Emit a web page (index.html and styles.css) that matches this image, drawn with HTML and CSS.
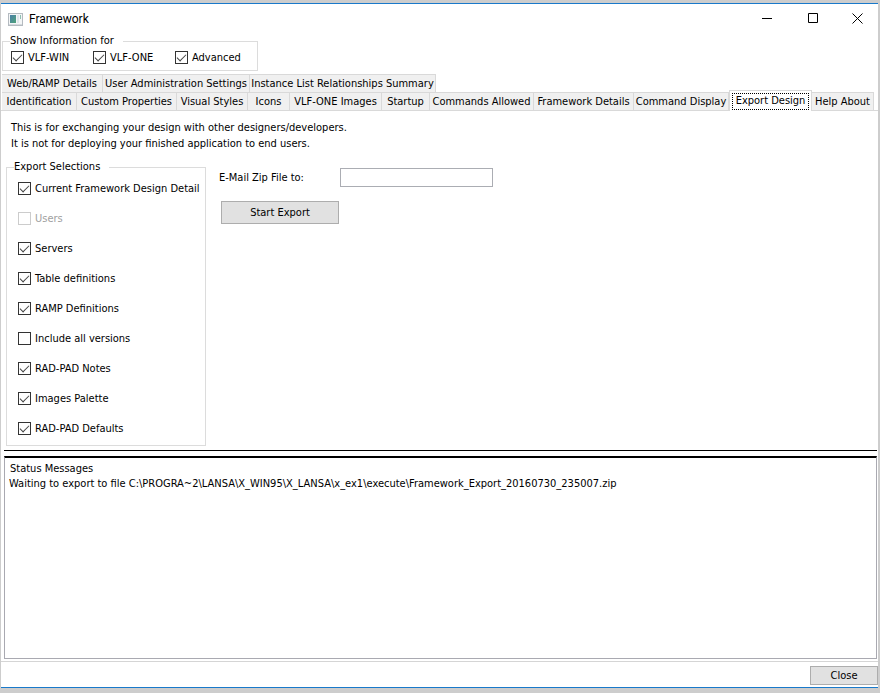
FILE: index.html
```html
<!DOCTYPE html>
<html lang="en">
<head>
    <meta charset="UTF-8">
    <meta name="viewport" content="width=device-width, initial-scale=1.0">
    <title>Framework</title>
    <link rel="stylesheet" href="styles.css">
</head>
<body>
    <div id="window">
        <!-- title bar -->
        <header class="titlebar">
            <svg class="app-icon" width="15" height="13" viewBox="0 0 15 13">
                <defs>
                    <linearGradient id="pane" x1="0" y1="0" x2="1" y2="1">
                        <stop offset="0" stop-color="#4a7fa8"/>
                        <stop offset="1" stop-color="#4fa37a"/>
                    </linearGradient>
                </defs>
                <rect x="0.5" y="0.5" width="14" height="12" fill="#f4f6f7" stroke="#b4bac0"/>
                <rect x="2" y="2" width="6" height="8" fill="url(#pane)"/>
                <rect x="9" y="2" width="2" height="8" fill="#dfe5ea"/>
                <rect x="12" y="2" width="1" height="4" fill="#8fc0b0"/>
                <rect x="1" y="11" width="13" height="1" fill="#d5dade"/>
            </svg>
            <h1>Framework</h1>
            <div class="win-buttons">
                <button type="button" aria-label="Minimize"><svg width="11" height="11" viewBox="0 0 11 11"><path d="M0 5.5h10"/></svg></button>
                <button type="button" aria-label="Maximize"><svg width="11" height="11" viewBox="0 0 11 11"><path d="M0.5 0.5h9v9h-9z"/></svg></button>
                <button type="button" aria-label="Close window"><svg width="11" height="11" viewBox="0 0 11 11"><path d="M0.5 0.5l10 10M10.5 0.5l-10 10"/></svg></button>
            </div>
        </header>

        <fieldset class="show-info">
            <legend>Show Information for</legend>
            <div class="show-list">
                <label><input type="checkbox" checked>VLF-WIN</label>
                <label><input type="checkbox" checked>VLF-ONE</label>
                <label><input type="checkbox" checked>Advanced</label>
            </div>
        </fieldset>

        <!-- two rows of tabs -->
        <nav class="tabs" role="tablist">
            <div class="tab-row upper">
                <button type="button" role="tab">Web/RAMP Details</button>
                <button type="button" role="tab">User Administration Settings</button>
                <button type="button" role="tab">Instance List Relationships Summary</button>
            </div>
            <div class="tab-row lower">
                <button type="button" role="tab">Identification</button>
                <button type="button" role="tab">Custom Properties</button>
                <button type="button" role="tab">Visual Styles</button>
                <button type="button" role="tab">Icons</button>
                <button type="button" role="tab">VLF-ONE Images</button>
                <button type="button" role="tab">Startup</button>
                <button type="button" role="tab">Commands Allowed</button>
                <button type="button" role="tab">Framework Details</button>
                <button type="button" role="tab">Command Display</button>
                <button type="button" role="tab" class="active" aria-selected="true"><span>Export Design</span></button>
                <button type="button" role="tab">Help About</button>
            </div>
        </nav>

        <main class="panel">
            <p>This is for exchanging your design with other designers/developers.<br>It is not for deploying your finished application to end users.</p>
            <div class="export">
                <fieldset class="selections">
                    <legend>Export Selections</legend>
                    <div class="selection-list">
                        <label><input type="checkbox" checked>Current Framework Design Detail</label>
                        <label class="disabled"><input type="checkbox" disabled>Users</label>
                        <label><input type="checkbox" checked>Servers</label>
                        <label><input type="checkbox" checked>Table definitions</label>
                        <label><input type="checkbox" checked>RAMP Definitions</label>
                        <label><input type="checkbox">Include all versions</label>
                        <label><input type="checkbox" checked>RAD-PAD Notes</label>
                        <label><input type="checkbox" checked>Images Palette</label>
                        <label><input type="checkbox" checked>RAD-PAD Defaults</label>
                    </div>
                </fieldset>
                <form class="send">
                    <div class="mail-row">
                        <label for="email">E-Mail Zip File to:</label>
                        <input type="text" id="email">
                    </div>
                    <button type="button" class="btn start">Start Export</button>
                </form>
            </div>
        </main>

        <section class="status">
            <h2>Status Messages</h2>
            <p>Waiting to export to file C:\PROGRA~2\LANSA\X_WIN95\X_LANSA\x_ex1\execute\Framework_Export_20160730_235007.zip</p>
        </section>

        <footer>
            <button type="button" class="btn close">Close</button>
        </footer>
    </div>
</body>
</html>
```
FILE: styles.css
```css
*{
    margin: 0;
    padding: 0;
    box-sizing: border-box;
}
body{
    min-height: 100vh;
    display: flex;
    padding: 3px 2px 5px 1px;
    background-color: #cdcdcd;
    font: 11px/14px Tahoma, "DejaVu Sans Condensed", sans-serif;
    color: #000;
}
button, input{
    font: inherit;
    color: inherit;
}
h1, h2{
    font-weight: normal;
}
#window{
    flex: 1;
    min-width: 0;
    display: flex;
    flex-direction: column;
    background-color: #fff;
    border-top: 1px solid #1979ca;
    border-bottom: 1px solid #1979ca;
}

/* title bar */
.titlebar{
    height: 30px;
    display: flex;
    align-items: center;
    padding-left: 7px;
}
.titlebar h1{
    flex: 1;
    margin-left: 6px;
    font: 12px/16px Roboto, sans-serif;
}
.win-buttons{
    display: flex;
}
.win-buttons button{
    width: 46px;
    height: 30px;
    display: flex;
    align-items: center;
    justify-content: center;
    padding-bottom: 1px;
    border: none;
    background: none;
}
.win-buttons button:last-child{
    width: 42px;
}
.win-buttons path{
    fill: none;
    stroke: #000;
}

/* group boxes and tick boxes */
fieldset{
    border: 1px solid #dcdcdc;
}
legend{
    margin-left: 7px;
    padding-right: 9px;
}
.show-info{
    width: 256px;
    margin-left: 1px;
}
.show-list{
    display: grid;
    grid-template-columns: repeat(3, 82px);
    padding: 3px 0 5px 8px;
}
label{
    display: flex;
    align-items: flex-start;
    white-space: nowrap;
}
input[type=checkbox]{
    appearance: none;
    position: relative;
    width: 13px;
    height: 13px;
    margin-right: 4px;
    border: 1px solid #333;
    background-color: #fff;
}
input[type=checkbox]:checked::after{
    content: "";
    position: absolute;
    left: 1px;
    top: 2px;
    width: 8px;
    height: 4px;
    border: solid #444;
    border-width: 0 0 1px 1px;
    transform: rotate(-45deg);
}
.disabled{
    color: #a0a0a0;
}
.disabled input[type=checkbox]{
    border-color: #ccc;
}

/* tabs */
.tabs{
    padding: 3px 0 0 1px;
    border-bottom: 1px solid #d9d9d9;
}
.tab-row{
    display: grid;
    height: 18px;
}
.upper{
    grid-template-columns: 101px 147px 186px;
}
.lower{
    grid-template-columns: 75px 100px 71px 42px 92px 48px 104px 100px 95px 83px 62px;
}
.tab-row button{
    height: 18px;
    border: solid #d9d9d9;
    border-width: 1px 1px 0 0;
    background-color: #f0f0f0;
    white-space: nowrap;
}
.tab-row .active{
    height: 21px;
    margin: -2px 0 -1px;
    padding: 1px 2px;
    border-left-width: 1px;
    background-color: #fff;
}
.active span{
    display: block;
    height: 17px;
    border: 1px dotted #000;
}

/* export page */
.panel{
    padding: 9px 5px 4px;
}
.panel p{
    padding-left: 5px;
    line-height: 16px;
}
.export{
    display: flex;
    padding-top: 8px;
}
.selections{
    flex: none;
    width: 200px;
}
.selection-list{
    display: flex;
    flex-direction: column;
    gap: 16px;
    padding: 8px 0 9px 11px;
}
.send{
    padding: 8px 0 0 13px;
}
.mail-row{
    display: flex;
}
.mail-row label{
    width: 121px;
    line-height: 19px;
}
.mail-row input{
    width: 153px;
    height: 19px;
    padding: 0 3px;
    border: 1px solid #abadb3;
}
.btn{
    border: 1px solid #adadad;
    background-color: #e1e1e1;
}
.start{
    width: 118px;
    height: 23px;
    margin: 14px 0 0 2px;
}

/* messages */
.status{
    flex: 1;
    position: relative;
    margin: 6px 1px 2px 3px;
    padding: 3px 4px;
    border: 1px solid #a9a9b1;
    border-top: 2px solid #000;
}
.status::before{
    content: "";
    position: absolute;
    left: -1px;
    right: -1px;
    top: -8px;
    height: 1px;
    background-color: #000;
}
.status h2{
    padding-left: 1px;
    font-size: 11px;
    line-height: 15px;
}
.status p{
    line-height: 15px;
}
footer{
    display: flex;
    justify-content: flex-end;
    padding: 4px 0 2px;
    border-top: 1px solid #d5d5d5;
}
.close{
    width: 68px;
    height: 19px;
}
```
